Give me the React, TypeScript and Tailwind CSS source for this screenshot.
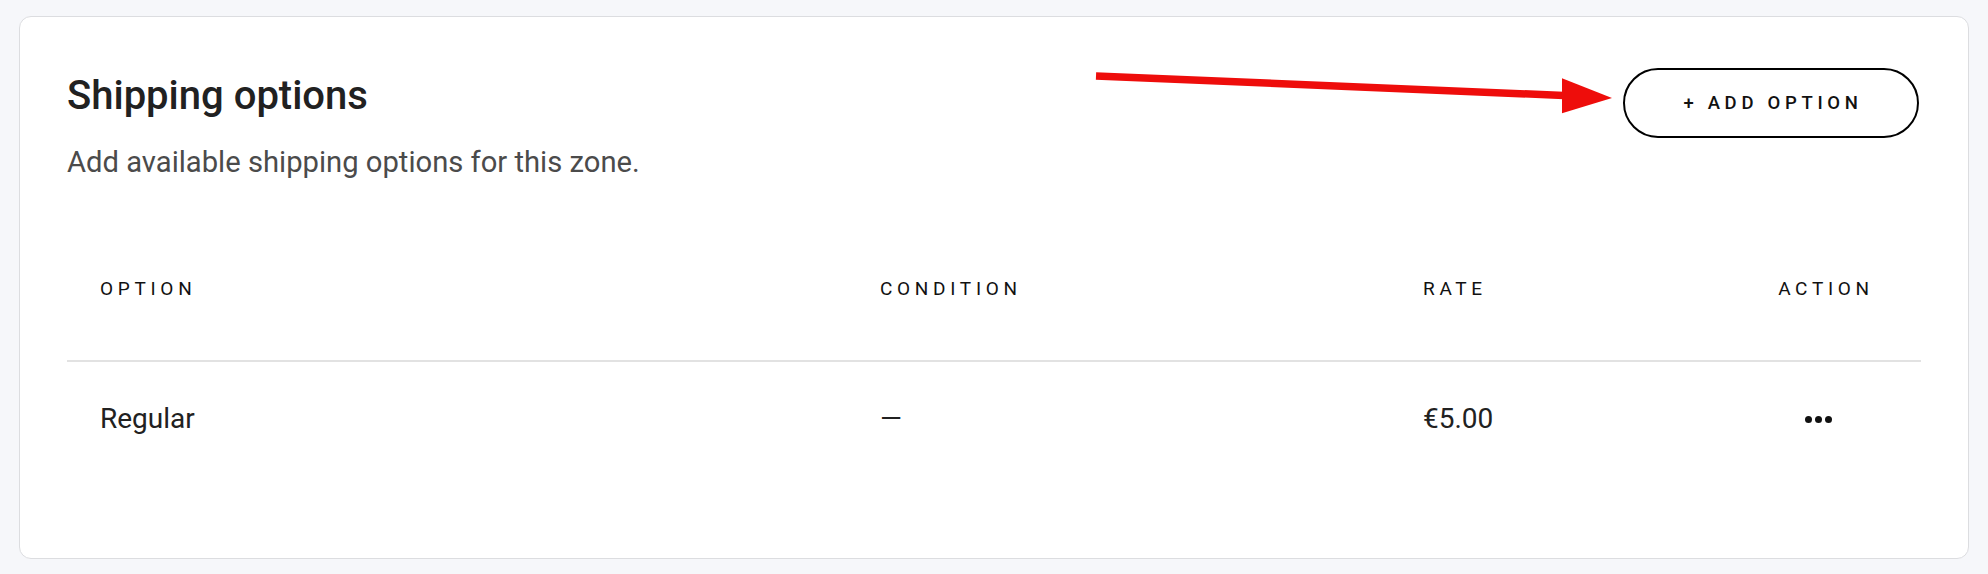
const rows = [{ option: 'Regular', condition: '—', rate: '€5.00' }]

function RedArrow() {
  return (
    <svg
      className="pointer-events-none absolute left-[1090px] top-[60px]"
      width="530"
      height="60"
      viewBox="0 0 530 60"
    >
      <line x1="6" y1="16" x2="474" y2="35.5" stroke="#ee0d0b" strokeWidth="7.5" />
      <polygon points="472,18.3 522,38 472,53.3" fill="#ee0d0b" />
    </svg>
  )
}

export default function App() {
  return (
    <div className="relative min-h-[574px] w-full bg-[#f6f7fa] px-[19px] pt-[16px] pb-[15px] font-['Roboto',sans-serif]">
      <section className="rounded-[12px] border border-[#dcdde0] bg-white px-[47px] pt-[55px] pb-[121px]">
        <div className="flex items-start justify-between">
          <div>
            <h2 className="text-[40px] leading-[48px] font-medium text-[#212121]">Shipping options</h2>
            <p className="mt-[24px] text-[29.2px] leading-[36px] text-[#4b4b4b]">
              Add available shipping options for this zone.
            </p>
          </div>
          <button
            type="button"
            className="mt-[-4px] mr-[2px] flex h-[70px] w-[296px] items-center justify-center rounded-full border-2 border-black bg-white pt-[1px] pl-[4px] text-[18.5px] font-medium tracking-[4.7px] text-[#111]"
          >
            + ADD OPTION
          </button>
        </div>

        <div className="mt-[97px]">
          <div className="grid grid-cols-[780px_543px_337px_194px] border-b-2 border-[#e2e2e2] pb-[59px] text-[19px] leading-[24px] tracking-[4.7px] text-[#111]">
            <div className="pl-[33px]">OPTION</div>
            <div className="pl-[33px]">CONDITION</div>
            <div className="pl-[33px]">RATE</div>
            <div className="pl-[4px] text-center">ACTION</div>
          </div>
          {rows.map((row) => (
            <div
              key={row.option}
              className="grid grid-cols-[780px_543px_337px_194px] pt-[39px] text-[28px] leading-[36px] text-[#212121]"
            >
              <div className="pl-[33px]">{row.option}</div>
              <div className="pl-[33px]">{row.condition}</div>
              <div className="pl-[33px]">{row.rate}</div>
              <div className="flex items-center justify-center gap-[3px] pr-[12px]">
                <span className="h-[7px] w-[7px] rounded-full bg-[#111]" />
                <span className="h-[7px] w-[7px] rounded-full bg-[#111]" />
                <span className="h-[7px] w-[7px] rounded-full bg-[#111]" />
              </div>
            </div>
          ))}
        </div>
      </section>
      <RedArrow />
    </div>
  )
}
